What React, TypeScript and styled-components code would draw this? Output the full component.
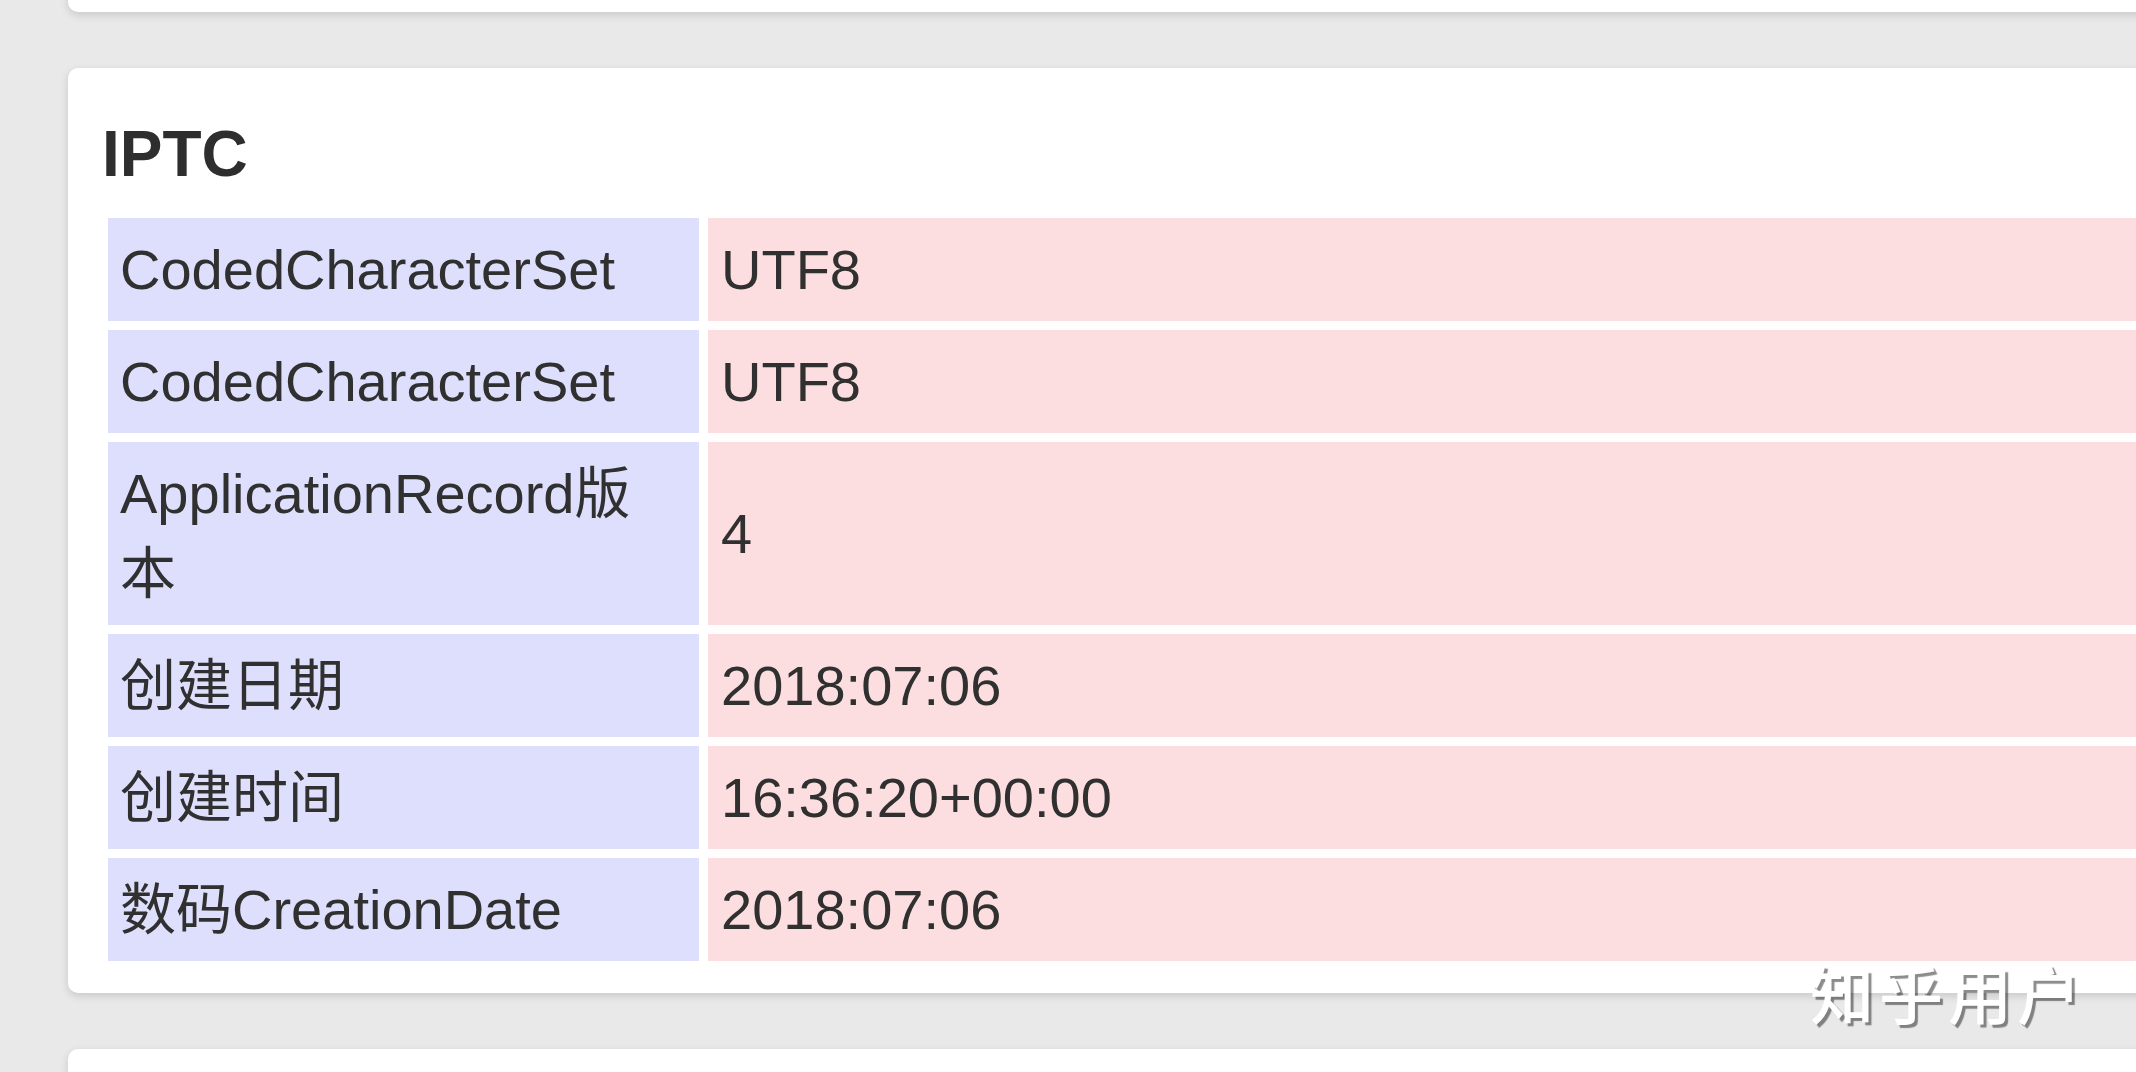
import React from "react";
import styled, { createGlobalStyle } from "styled-components";

const GlobalStyle = createGlobalStyle`
  html, body {
    margin: 0;
    padding: 0;
    background: #e9e9e9;
    overflow: hidden;
    width: 2136px;
    height: 1072px;
  }
  body {
    font-family: "Liberation Sans", Arial, "Noto Sans CJK SC", sans-serif;
    color: #333333;
  }
`;

const Page = styled.div`
  position: relative;
  width: 2136px;
  height: 1072px;
  overflow: hidden;
  padding-left: 68px;
  box-sizing: border-box;
  display: flex;
  flex-direction: column;
  gap: 56px;
`;

const Card = styled.section<{ $clipTop?: boolean }>`
  width: 2300px;
  flex-shrink: 0;
  background: #ffffff;
  border-radius: 10px;
  box-shadow: 0 3px 8px rgba(0, 0, 0, 0.14);
  box-sizing: border-box;
  margin-top: ${(p) => (p.$clipTop ? "-100px" : "0")};
  height: ${(p) => (p.$clipTop ? "112px" : "auto")};
`;

const SectionBody = styled.div`
  padding: 51px 0 23px 31px;
`;

const Heading = styled.h2`
  margin: 0 0 20px 0;
  padding-left: 3px;
  font-family: "Liberation Sans", Arial, sans-serif;
  font-weight: bold;
  font-size: 64px;
  line-height: 70px;
  color: #2e2e2e;
`;

const Table = styled.table`
  border-collapse: separate;
  border-spacing: 9px;
  width: 2200px;
  table-layout: fixed;
`;

const KeyCell = styled.td`
  width: 591px;
  box-sizing: border-box;
  background: #dedefd;
  padding: 11.5px 40px 11.5px 12px;
  font-size: 56px;
  line-height: 80px;
  vertical-align: middle;
  color: #303030;
  font-family: "Liberation Sans", Arial, "Noto Sans CJK SC", sans-serif;
`;

const ValueCell = styled.td`
  background: #fddee0;
  padding: 11.5px 12px 11.5px 13px;
  font-size: 56px;
  line-height: 80px;
  vertical-align: middle;
  color: #303030;
  font-family: "Liberation Sans", Arial, "Noto Sans CJK SC", sans-serif;
`;

const Watermark = styled.div`
  position: absolute;
  left: 1810px;
  top: 951px;
  font-family: "Noto Sans CJK SC", sans-serif;
  font-weight: 500;
  font-size: 64px;
  letter-spacing: 5px;
  line-height: 80px;
  color: #ffffff;
  text-shadow: 3px 3px 1px rgba(0, 0, 0, 0.45);
  white-space: nowrap;
`;

const rows: [string, string][] = [
  ["CodedCharacterSet", "UTF8"],
  ["CodedCharacterSet", "UTF8"],
  ["ApplicationRecord版本", "4"],
  ["创建日期", "2018:07:06"],
  ["创建时间", "16:36:20+00:00"],
  ["数码CreationDate", "2018:07:06"],
];

export default function App() {
  return (
    <>
      <GlobalStyle />
      <Page>
        <Card $clipTop />
        <Card>
          <SectionBody>
            <Heading>IPTC</Heading>
            <Table>
              <tbody>
                {rows.map(([k, v], i) => (
                  <tr key={i}>
                    <KeyCell>{k}</KeyCell>
                    <ValueCell>{v}</ValueCell>
                  </tr>
                ))}
              </tbody>
            </Table>
          </SectionBody>
        </Card>
        <Card>
          <SectionBody />
        </Card>
        <Watermark>知乎用户</Watermark>
      </Page>
    </>
  );
}
